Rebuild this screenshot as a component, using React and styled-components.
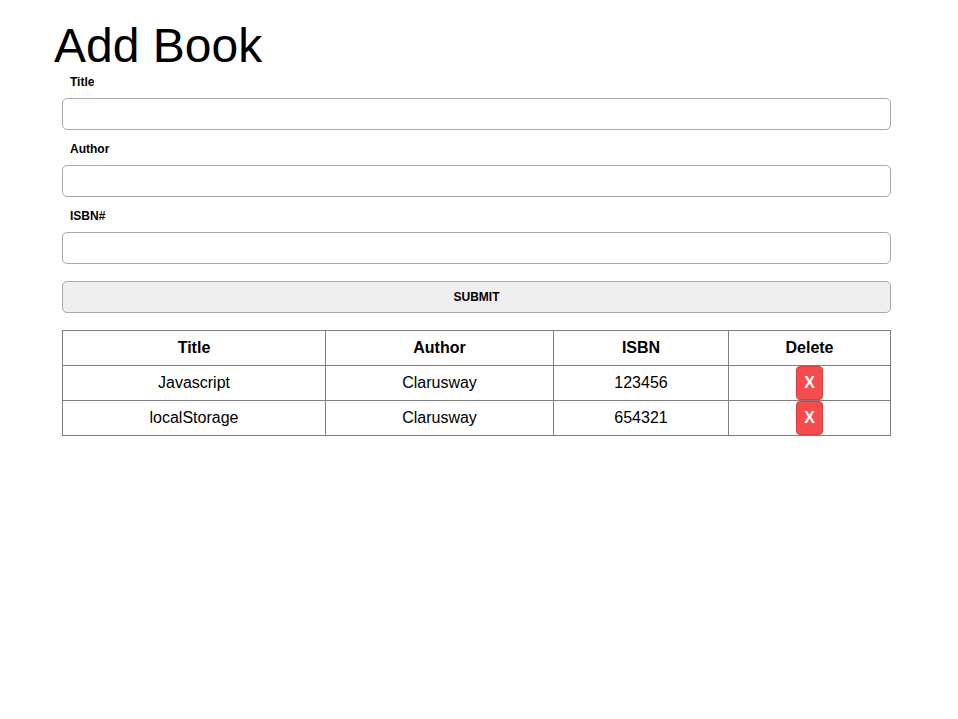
import React, { useState } from 'react';
import styled, { createGlobalStyle } from 'styled-components';

const GlobalStyle = createGlobalStyle`
    body {
        margin: 0;
        background: #fff;
        font-family: "Liberation Sans", Arial, sans-serif;
        color: #000;
    }
`;

const Page = styled.div`
    padding-left: 54px;
`;
const Heading = styled.h1`
    margin: 18px 0 2px;
    font-size: 48px;
    line-height: 55px;
    font-weight: 400;
`;
const Form = styled.form`
    display: flex;
    flex-direction: column;
    width: 829px;
    margin-left: 8px;
`;
const Field = styled.div`
    display: flex;
    flex-direction: column;
    margin-bottom: 12px;
`;
const Label = styled.label`
    margin: 0 0 9px 8px;
    font-size: 12px;
    line-height: 14px;
    font-weight: 700;
`;
const Input = styled.input`
    height: 32px;
    box-sizing: border-box;
    border: 1px solid #a9a9a9;
    border-radius: 5px;
    padding: 0 8px;
    font-family: inherit;
    font-size: 14px;
    outline: none;
`;
const SubmitButton = styled.button`
    height: 32px;
    margin-top: 5px;
    box-sizing: border-box;
    border: 1px solid #a9a9a9;
    border-radius: 5px;
    background: #efefef;
    font-family: inherit;
    font-size: 12px;
    font-weight: 700;
    color: #000;
    cursor: pointer;
`;
const Table = styled.table`
    width: 828px;
    margin: 17px 0 0 8px;
    border-collapse: collapse;
    table-layout: fixed;
    font-size: 16px;
`;
const Th = styled.th`
    height: 34px;
    padding: 0;
    border: 1px solid #808080;
    font-weight: 700;
    text-align: center;
`;
const Td = styled.td`
    height: 34px;
    padding: 0;
    border: 1px solid #808080;
    text-align: center;
    vertical-align: middle;
`;
const DeleteButton = styled.button`
    display: block;
    width: 27px;
    height: 34px;
    margin: 0 auto;
    padding: 0;
    border: 1px solid #e03c3c;
    border-radius: 4px;
    background: #f64c4c;
    color: #fff;
    font-family: inherit;
    font-size: 16px;
    font-weight: 700;
    cursor: pointer;
`;

const columns = [
    { name: 'Title', width: 263 },
    { name: 'Author', width: 228 },
    { name: 'ISBN', width: 175 },
    { name: 'Delete', width: 162 },
];

const initialBooks = [
    { title: 'Javascript', author: 'Clarusway', isbn: '123456' },
    { title: 'localStorage', author: 'Clarusway', isbn: '654321' },
];

export default function App() {
    const [books, setBooks] = useState(initialBooks);
    const [form, setForm] = useState({ title: '', author: '', isbn: '' });

    const onChange = (e) => setForm({ ...form, [e.target.name]: e.target.value });
    const onSubmit = (e) => {
        e.preventDefault();
        if (!form.title || !form.author || !form.isbn) return;
        setBooks([...books, form]);
        setForm({ title: '', author: '', isbn: '' });
    };
    const onDelete = (idx) => setBooks(books.filter((_, i) => i !== idx));

    return (
        <>
            <GlobalStyle />
            <Page>
                <Heading>Add Book</Heading>
                <Form onSubmit={onSubmit}>
                    <Field>
                        <Label htmlFor="title">Title</Label>
                        <Input id="title" name="title" value={form.title} onChange={onChange} />
                    </Field>
                    <Field>
                        <Label htmlFor="author">Author</Label>
                        <Input id="author" name="author" value={form.author} onChange={onChange} />
                    </Field>
                    <Field>
                        <Label htmlFor="isbn">ISBN#</Label>
                        <Input id="isbn" name="isbn" value={form.isbn} onChange={onChange} />
                    </Field>
                    <SubmitButton type="submit">SUBMIT</SubmitButton>
                </Form>
                <Table>
                    <colgroup>
                        {columns.map((col) => (
                            <col key={col.name} style={{ width: col.width }} />
                        ))}
                    </colgroup>
                    <thead>
                        <tr>
                            {columns.map((col) => (
                                <Th key={col.name}>{col.name}</Th>
                            ))}
                        </tr>
                    </thead>
                    <tbody>
                        {books.map((book, idx) => (
                            <tr key={`book_${idx}`}>
                                <Td>{book.title}</Td>
                                <Td>{book.author}</Td>
                                <Td>{book.isbn}</Td>
                                <Td>
                                    <DeleteButton type="button" onClick={() => onDelete(idx)}>X</DeleteButton>
                                </Td>
                            </tr>
                        ))}
                    </tbody>
                </Table>
            </Page>
        </>
    );
}
